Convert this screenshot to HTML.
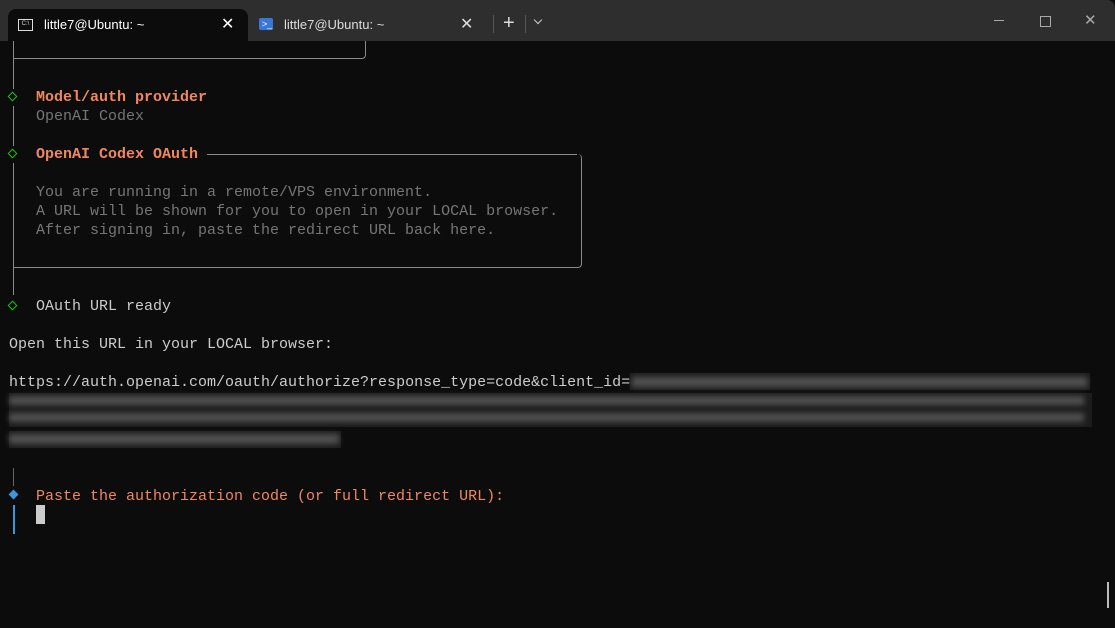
<!DOCTYPE html><html><head><style>
body{margin:0;width:1115px;height:628px;background:#0c0c0c;overflow:hidden;position:relative;font-family:"Liberation Mono",monospace;}
.bar{position:absolute;left:0;top:0;width:1115px;height:41px;background:#2e2e2e;border-top-right-radius:8px}
.tab{position:absolute;top:9px;height:32px;font:13px "Liberation Sans",sans-serif;color:#fff}
.t{position:absolute;left:0;white-space:pre;font-size:15px;line-height:19px;height:19px;letter-spacing:0}
.o{color:#f0875f;font-weight:bold}.g{color:#767676}.w{color:#cccccc}
.v{position:absolute;left:13px;width:1px;background:#8a8a8a}
.d{position:absolute;left:9px;width:7px;height:7px;border:1.5px solid #16c60c;transform:rotate(45deg);box-sizing:border-box}
.blur{position:absolute;background:#7a7a7a;filter:blur(3px);opacity:.55}
</style></head><body>
<div class="bar"></div>
<div class="tab" style="left:8px;width:240px;background:#0c0c0c;border-radius:8px 8px 0 0">
<div style="position:absolute;left:10px;top:10px;width:13px;height:10px;border:1px solid #ddd;font-size:6px;line-height:9px;color:#ddd;text-align:center">C:\</div>
<span style="position:absolute;left:36px;top:8px">little7@Ubuntu: ~</span>
<span style="position:absolute;left:213px;top:5px;font-size:16px">✕</span></div>
<div class="tab" style="left:248px;width:240px">
<div style="position:absolute;left:11px;top:9px;width:14px;height:12px;background:#3a78d8;border-radius:2px;color:#fff;font-size:9px;line-height:12px;text-indent:3px">&gt;_</div>
<span style="position:absolute;left:36px;top:8px;color:#ddd">little7@Ubuntu: ~</span>
<span style="position:absolute;left:212px;top:5px;font-size:16px;color:#ddd">✕</span></div>
<div style="position:absolute;left:493px;top:15px;width:1px;height:18px;background:#555"></div>
<div style="position:absolute;left:503px;top:12px;color:#ddd;font:20px 'Liberation Sans'">+</div>
<div style="position:absolute;left:525px;top:15px;width:1px;height:18px;background:#555"></div>
<div style="position:absolute;left:535px;top:17px;width:5px;height:5px;border-right:1px solid #ccc;border-bottom:1px solid #ccc;transform:rotate(45deg)"></div>
<div style="position:absolute;left:994px;top:20px;width:10px;height:1px;background:#aaa"></div>
<div style="position:absolute;left:1040px;top:16px;width:9px;height:9px;border:1px solid #aaa"></div>
<div style="position:absolute;left:1084px;top:11px;color:#aaa;font:15px 'Liberation Sans'">✕</div>

<div class="v" style="top:41px;height:48px"></div>
<div style="position:absolute;left:13px;top:41px;width:352px;height:17px;border-bottom:1px solid #8a8a8a;border-right:1px solid #8a8a8a;border-bottom-right-radius:4px"></div>
<div class="d" style="top:93px"></div>
<div class="v" style="top:106px;height:40px"></div>
<div class="d" style="top:150px"></div>
<div class="v" style="top:163px;height:132px"></div>
<div style="position:absolute;left:13px;top:154px;width:568px;height:113px;border-right:1px solid #8a8a8a;border-bottom:1px solid #8a8a8a;border-radius:0 4px 4px 0"></div>
<div style="position:absolute;left:207px;top:154px;width:370px;height:1px;background:#8a8a8a"></div>
<div class="d" style="top:302px"></div>

<div class="t o" style="left:36px;top:88px">Model/auth provider</div>
<div class="t g" style="left:36px;top:107px">OpenAI Codex</div>
<div class="t o" style="left:36px;top:145px">OpenAI Codex OAuth</div>
<div class="t g" style="left:36px;top:183px">You are running in a remote/VPS environment.</div>
<div class="t g" style="left:36px;top:202px">A URL will be shown for you to open in your LOCAL browser.</div>
<div class="t g" style="left:36px;top:221px">After signing in, paste the redirect URL back here.</div>
<div class="t w" style="left:36px;top:297px">OAuth URL ready</div>
<div class="t w" style="left:9px;top:335px">Open this URL in your LOCAL browser:</div>
<div class="t w" style="left:9px;top:373px">https://auth.openai.com/oauth/authorize?response_type=code&amp;client_id=</div>
<div style="position:absolute;left:630px;top:373px;width:460px;height:17px;background:#1e1e1e"></div>
<div class="blur" style="left:632px;top:377px;width:455px;height:10px"></div>
<div style="position:absolute;left:9px;top:393px;width:1083px;height:34px;background:#1c1c1c"></div>
<div class="blur" style="left:9px;top:396px;width:1075px;height:9px"></div>
<div class="blur" style="left:9px;top:413px;width:1075px;height:9px"></div>
<div style="position:absolute;left:9px;top:431px;width:332px;height:17px;background:#1c1c1c"></div>
<div class="blur" style="left:9px;top:434px;width:330px;height:10px"></div>
<div class="v" style="top:468px;height:18px;background:#666"></div>
<div style="position:absolute;left:10px;top:491px;width:7px;height:7px;background:#3a96dd;transform:rotate(45deg)"></div>
<div class="t o" style="left:36px;top:487px;font-weight:normal">Paste the authorization code (or full redirect URL):</div>
<div style="position:absolute;left:13px;top:505px;width:1.5px;height:29px;background:#3a96dd"></div>
<div style="position:absolute;left:36px;top:505px;width:9px;height:19px;background:#cccccc"></div>
<div style="position:absolute;left:1107px;top:582px;width:2px;height:26px;background:#bbb"></div>
</body></html>
